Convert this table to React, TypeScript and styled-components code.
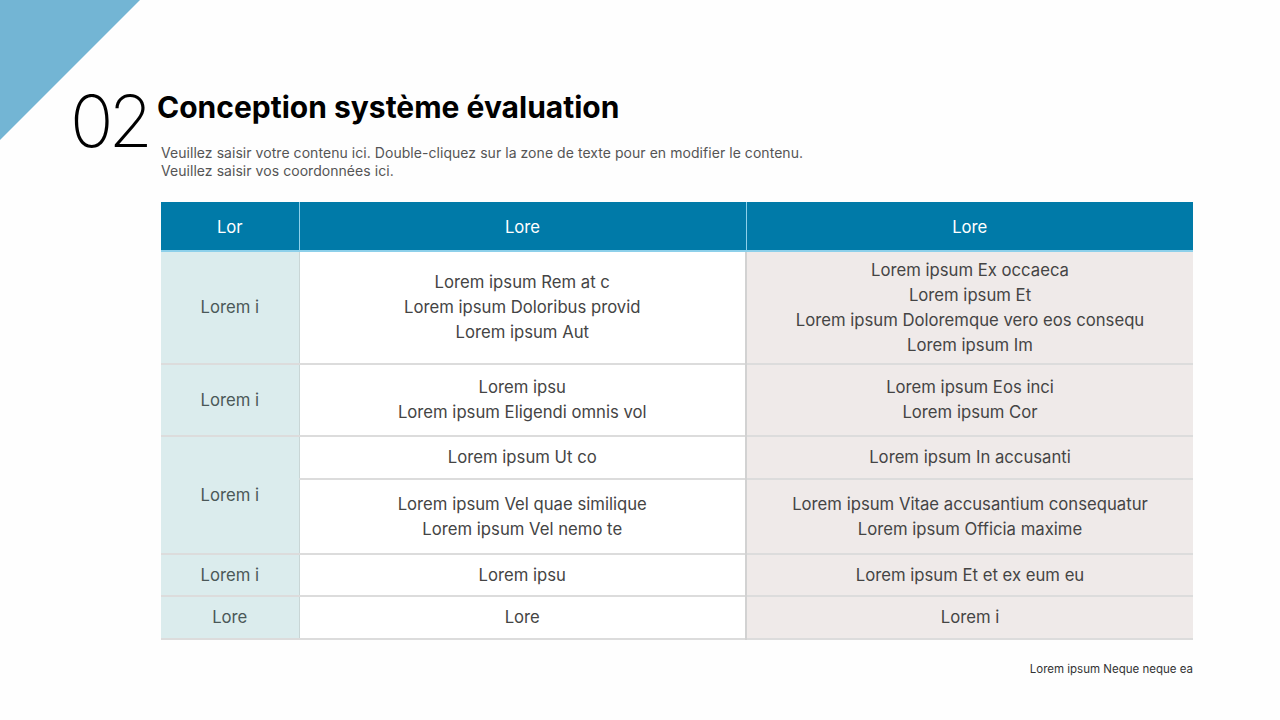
import React from 'react'
import styled, { createGlobalStyle } from 'styled-components'

const Global = createGlobalStyle`
  html, body {
    margin: 0;
    padding: 0;
    background: #ffffff;
  }
  body {
    font-family: Inter, "Noto Sans", "Liberation Sans", sans-serif;
  }
`

const Page = styled.div`
  position: relative;
  width: 1280px;
  height: 720px;
  box-sizing: border-box;
  padding: 85px 87px 0 70px;
  display: flex;
  background: #fefefe;
  overflow: hidden;

  &::before {
    content: '';
    position: absolute;
    left: 0;
    top: 0;
    width: 140px;
    height: 140px;
    background: #73b5d4;
    clip-path: polygon(0 0, 100% 0, 0 100%);
  }
`

const Number = styled.div`
  position: relative;
  width: 87px;
  flex: none;
  font-size: 72px;
  line-height: 72px;
  font-weight: 200;
  color: #000;
  letter-spacing: -5px;
`

const Main = styled.div`
  flex: 1;
  display: flex;
  flex-direction: column;
  padding-top: 5px;
`

const Title = styled.h1`
  margin: 0;
  font-size: 30px;
  line-height: 35px;
  font-weight: 700;
  color: #000;
`

const Subtitle = styled.p`
  margin: 19px 0 0 4px;
  font-size: 14px;
  line-height: 18px;
  font-weight: 400;
  letter-spacing: 0.05px;
  color: #555;
`

const Table = styled.table`
  margin: 22px 0 0 4px;
  width: 1032px;
  border-collapse: collapse;
  table-layout: fixed;
  font-size: 16.7px;
  line-height: 25px;
  text-align: center;
`

const HeadCell = styled.th`
  height: 46px;
  padding: 2px 0 0;
  background: #007aa8;
  color: #fff;
  font-weight: 400;
  border-left: 1px solid #8dd0ea;
  border-bottom: 2px solid #8dd0ea;
  &:first-child {
    border-left: none;
  }
`

const Row = styled.tr<{ $h: number }>`
  height: ${p => p.$h}px;
  border-bottom: 2px solid #dcdcdc;
`

const Label = styled.td`
  padding: 0;
  background: #dbeced;
  color: #4a5858;
  border-right: 1px solid #c9d6d6;
`

const Cell = styled.td<{ $alt?: boolean }>`
  padding: 0;
  color: #444;
  background: ${p => (p.$alt ? '#efeae9' : '#ffffff')};
  border-left: ${p => (p.$alt ? '2px solid #d2d2d2' : 'none')};
`

const Footer = styled.div`
  margin-top: 21px;
  font-size: 11.5px;
  line-height: 16px;
  color: #333;
  text-align: right;
`

const lines = (items: string[]) =>
  items.map((t, i) => <div key={i}>{t}</div>)

const App: React.FC = () => {
  return (
    <Page>
      <Global />
      <Number>02</Number>
      <Main>
        <Title>Conception système évaluation</Title>
        <Subtitle>
          Veuillez saisir votre contenu ici. Double-cliquez sur la zone de texte pour en modifier le contenu.
          <br />
          Veuillez saisir vos coordonnées ici.
        </Subtitle>
        <Table>
          <colgroup>
            <col style={{ width: 138 }} />
            <col style={{ width: 447 }} />
            <col style={{ width: 447 }} />
          </colgroup>
          <thead>
            <tr>
              <HeadCell>Lor</HeadCell>
              <HeadCell>Lore</HeadCell>
              <HeadCell>Lore</HeadCell>
            </tr>
          </thead>
          <tbody>
            <Row $h={113}>
              <Label>Lorem i</Label>
              <Cell>{lines(['Lorem ipsum Rem at c', 'Lorem ipsum Doloribus provid', 'Lorem ipsum Aut'])}</Cell>
              <Cell $alt>
                {lines([
                  'Lorem ipsum Ex occaeca',
                  'Lorem ipsum Et',
                  'Lorem ipsum Doloremque vero eos consequ',
                  'Lorem ipsum Im',
                ])}
              </Cell>
            </Row>
            <Row $h={72}>
              <Label>Lorem i</Label>
              <Cell>{lines(['Lorem ipsu', 'Lorem ipsum Eligendi omnis vol'])}</Cell>
              <Cell $alt>{lines(['Lorem ipsum Eos inci', 'Lorem ipsum Cor'])}</Cell>
            </Row>
            <Row $h={43}>
              <Label rowSpan={2}>Lorem i</Label>
              <Cell>Lorem ipsum Ut co</Cell>
              <Cell $alt>Lorem ipsum In accusanti</Cell>
            </Row>
            <Row $h={75}>
              <Cell>{lines(['Lorem ipsum Vel quae similique', 'Lorem ipsum Vel nemo te'])}</Cell>
              <Cell $alt>{lines(['Lorem ipsum Vitae accusantium consequatur', 'Lorem ipsum Officia maxime'])}</Cell>
            </Row>
            <Row $h={42}>
              <Label>Lorem i</Label>
              <Cell>Lorem ipsu</Cell>
              <Cell $alt>Lorem ipsum Et et ex eum eu</Cell>
            </Row>
            <Row $h={43}>
              <Label>Lore</Label>
              <Cell>Lore</Cell>
              <Cell $alt>Lorem i</Cell>
            </Row>
          </tbody>
        </Table>
        <Footer>Lorem ipsum Neque neque ea</Footer>
      </Main>
    </Page>
  )
}

export default App
